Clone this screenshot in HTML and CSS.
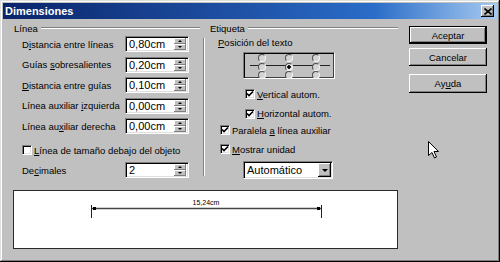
FILE: index.html
```html
<!DOCTYPE html>
<html lang="es">
<head>
  <meta charset="UTF-8" />
  <title>Dimensiones</title>
  <link rel="stylesheet" href="styles.css">
</head>
<body>

<div class="window">
  <div class="titlebar">
    <span class="title">Dimensiones</span>
    <span class="close-btn">
      <svg width="8" height="7" viewBox="0 0 8 7"><path d="M0.5 0.5 L7.5 6.5 M7.5 0.5 L0.5 6.5" stroke="#000" stroke-width="1.6"/></svg>
    </span>
  </div>

  <div class="content">
    <div class="main">
      <div class="groups">

        <!-- Línea -->
        <div class="group group-left">
          <div class="group-head"><span>Línea</span><span class="rule"></span></div>
          <div class="group-body">
            <div class="row"><label>D<u>i</u>stancia entre líneas</label><div class="field spin"><span>0,80cm</span><span class="spinner"><i class="up"></i><i class="down"></i></span></div></div>
            <div class="row"><label>Guías <u>s</u>obresalientes</label><div class="field spin"><span>0,20cm</span><span class="spinner"><i class="up"></i><i class="down"></i></span></div></div>
            <div class="row"><label><u>D</u>istancia entre guías</label><div class="field spin"><span>0,10cm</span><span class="spinner"><i class="up"></i><i class="down"></i></span></div></div>
            <div class="row"><label>Línea auxiliar <u>i</u>zquierda</label><div class="field spin"><span>0,00cm</span><span class="spinner"><i class="up"></i><i class="down"></i></span></div></div>
            <div class="row"><label>Línea au<u>x</u>iliar derecha</label><div class="field spin"><span>0,00cm</span><span class="spinner"><i class="up"></i><i class="down"></i></span></div></div>
            <div class="check-row check-under"><span class="checkbox"></span><span><u>L</u>ínea de tamaño debajo del objeto</span></div>
            <div class="row row-dec"><label>De<u>c</u>imales</label><div class="field spin"><span>2</span><span class="spinner"><i class="up"></i><i class="down"></i></span></div></div>
          </div>
        </div>

        <div class="vsep"></div>

        <!-- Etiqueta -->
        <div class="group group-right">
          <div class="group-head"><span>Etiqueta</span><span class="rule"></span></div>
          <div class="group-body">
            <div class="pos-label"><u>P</u>osición del texto</div>
            <div class="pos-box">
              <div class="radio-grid">
                <span class="radio"></span><span class="radio"></span><span class="radio"></span>
                <span class="radio"></span><span class="radio on"></span><span class="radio"></span>
                <span class="radio"></span><span class="radio"></span><span class="radio"></span>
              </div>
            </div>
            <div class="check-row check-vert"><span class="checkbox checked"><svg width="8" height="8" viewBox="0 0 8 8"><path d="M1 3.5 L3 5.5 L7 1.5" fill="none" stroke="#000" stroke-width="1.6"/></svg></span><span><u>V</u>ertical autom.</span></div>
            <div class="check-row check-horz"><span class="checkbox checked"><svg width="8" height="8" viewBox="0 0 8 8"><path d="M1 3.5 L3 5.5 L7 1.5" fill="none" stroke="#000" stroke-width="1.6"/></svg></span><span><u>H</u>orizontal autom.</span></div>
            <div class="check-row check-par"><span class="checkbox checked"><svg width="8" height="8" viewBox="0 0 8 8"><path d="M1 3.5 L3 5.5 L7 1.5" fill="none" stroke="#000" stroke-width="1.6"/></svg></span><span>Paralela <u>a</u> línea auxiliar</span></div>
            <div class="check-row check-unit"><span class="checkbox checked"><svg width="8" height="8" viewBox="0 0 8 8"><path d="M1 3.5 L3 5.5 L7 1.5" fill="none" stroke="#000" stroke-width="1.6"/></svg></span><span><u>M</u>ostrar unidad</span></div>
            <div class="field select"><span>Automático</span><span class="drop"><i class="down"></i></span></div>
          </div>
        </div>

      </div>

      <div class="preview">
        <svg width="383" height="57" viewBox="0 0 383 57">
          <line x1="78" y1="17.5" x2="307" y2="17.5" stroke="#444" stroke-width="1.5"/>
          <line x1="77.5" y1="14" x2="77.5" y2="27" stroke="#222" stroke-width="1"/>
          <line x1="307.5" y1="14" x2="307.5" y2="27" stroke="#222" stroke-width="1"/>
          <rect x="79" y="16" width="3" height="3" fill="#000"/>
          <rect x="303" y="16" width="3" height="3" fill="#000"/>
          <text x="192" y="14" font-size="7" text-anchor="middle" font-family="Liberation Sans, Arial, sans-serif" fill="#000">15,24cm</text>
        </svg>
      </div>
    </div>

    <div class="side">
      <div class="btn btn-default">Aceptar</div>
      <div class="btn">Cancelar</div>
      <div class="btn btn-help">Ay<u>u</u>da</div>
    </div>
  </div>

  <svg class="cursor" width="12" height="18" viewBox="0 0 12 18">
    <path d="M0.5 0.5 L0.5 14.5 L4 11.5 L6.5 17 L8.5 16 L6 10.5 L10.5 10.5 Z" fill="#fff" stroke="#000" stroke-width="1"/>
  </svg>
</div>

</body>
</html>
```

FILE: styles.css
```css
:root {
  --face: #c0c0c0;
  --shadow: #808080;
  --dark: #404040;
  --light: #dfdfdf;
}

* {
  box-sizing: border-box;
}

body {
  margin: 0;
  font-family: 'Liberation Sans', Arial, sans-serif;
  font-size: 9.5px;
  color: #000;
  background: var(--face);
}

u {
  text-decoration: underline;
  text-underline-offset: 1px;
}

.window {
  position: relative;
  width: 500px;
  height: 262px;
  padding: 3px;
  background: var(--face);
  box-shadow: inset -1px -1px #000, inset 1px 1px var(--light), inset -2px -2px var(--shadow), inset 2px 2px #fff;
}

.titlebar {
  height: 16px;
  display: flex;
  align-items: center;
  justify-content: space-between;
  padding: 0 3px 0 2px;
  background: linear-gradient(to right, #0a246a, #2a6cc8 75%, #a6caf0);
}

.title {
  color: #fff;
  font-weight: bold;
  font-size: 11px;
}

.close-btn {
  width: 13px;
  height: 12px;
  display: flex;
  align-items: center;
  justify-content: center;
  background: var(--face);
  box-shadow: inset -1px -1px #000, inset 1px 1px #fff, inset -2px -2px var(--shadow);
}

.content {
  display: flex;
  padding: 3px 0 0 10px;
}

.main {
  width: 385px;
}

.groups {
  display: flex;
  height: 164px;
}

.group-head {
  display: flex;
  align-items: center;
  gap: 3px;
  height: 12px;
  padding-left: 1px;
}

.rule {
  flex: 1;
  height: 2px;
  border-top: 1px solid var(--shadow);
  border-bottom: 1px solid #fff;
}

.group-left {
  width: 190px;
  padding-right: 3px;
}

.group-left .group-body {
  padding-left: 9px;
}

.vsep {
  width: 2px;
  height: 138px;
  margin-top: 16px;
  border-left: 1px solid var(--shadow);
  border-right: 1px solid #fff;
}

.group-right {
  width: 189px;
  margin-left: 4px;
}

.group-right .group-body {
  padding-left: 9px;
}

.row {
  display: flex;
  align-items: center;
  height: 16px;
  width: 167px;
  margin-top: 4.5px;
}

.row:first-child {
  margin-top: 2px;
}

.row label {
  flex: 1;
}

.row-dec {
  margin-top: 4px;
}

/* sunken white fields */
.field {
  display: flex;
  align-items: center;
  background: #fff;
  border: 1px solid;
  border-color: var(--shadow) #fff #fff var(--shadow);
  box-shadow: inset 1px 1px #000, inset -1px -1px var(--light);
  font-size: 11px;
}

.field > span:first-child {
  flex: 1;
  padding-left: 3px;
}

.spin {
  width: 64px;
  height: 16px;
}

.spinner {
  display: flex;
  flex-direction: column;
  width: 12px;
  height: 12px;
  margin-right: 2px;
}

.spinner i {
  flex: 1;
  display: flex;
  align-items: center;
  justify-content: center;
  background: var(--face);
  box-shadow: inset -1px -1px var(--shadow), inset 1px 1px #fff;
}

.up::after,
.down::after {
  content: '';
  border-left: 2px solid transparent;
  border-right: 2px solid transparent;
}

.up::after {
  border-bottom: 2px solid #000;
}

.down::after {
  border-top: 2px solid #000;
}

.check-row {
  display: flex;
  align-items: center;
  gap: 2px;
  height: 14px;
}

.check-under {
  height: 16px;
  margin-top: 8px;
}

.checkbox {
  width: 10px;
  height: 10px;
  display: flex;
  align-items: center;
  justify-content: center;
  background: #fff;
  border: 1px solid;
  border-color: var(--shadow) #fff #fff var(--shadow);
  box-shadow: inset 1px 1px #000, inset -1px -1px var(--light);
}

.pos-label {
  height: 14px;
  line-height: 14px;
  margin-top: 2px;
}

.pos-box {
  width: 92px;
  height: 27px;
  margin: 2px 0 0 25px;
  border: 1px solid;
  border-color: var(--shadow) #fff #fff var(--shadow);
  box-shadow: inset 1px 1px #000, inset -1px -1px var(--dark);
  background: linear-gradient(#222, #222) no-repeat 6px 12px / 80px 1px, var(--face);
}

.radio-grid {
  display: grid;
  grid-template-columns: repeat(3, 8px);
  grid-auto-rows: 8px;
  column-gap: 19px;
  row-gap: 0.5px;
  padding: 1px 0 0 14px;
}

.radio {
  width: 8px;
  height: 8px;
  border-radius: 50%;
  background: #d4d4d4;
  border: 1px solid #505050;
  border-right-color: #f4f4f4;
  border-bottom-color: #f4f4f4;
}

.radio.on {
  background: radial-gradient(circle, #000 1.5px, #e8e8e8 2px);
}

.check-vert {
  margin: 8px 0 0 27px;
}

.check-horz {
  margin: 5.5px 0 0 27px;
}

.check-par {
  margin: 2.5px 0 0 2px;
}

.check-unit {
  margin: 5px 0 0 2px;
}

.select {
  width: 90px;
  height: 18px;
  margin: 5px 0 0 25px;
}

.drop {
  width: 13px;
  height: 14px;
  margin-right: 1px;
  display: flex;
  align-items: center;
  justify-content: center;
  background: var(--face);
  box-shadow: inset -1px -1px #000, inset 1px 1px #fff, inset -2px -2px var(--shadow);
}

.drop .down::after {
  border-left-width: 3px;
  border-right-width: 3px;
  border-top-width: 3px;
}

.drop i {
  display: flex;
}

.preview {
  width: 385px;
  height: 59px;
  margin-top: 4px;
  background: #fff;
  border: 1px solid #2a2a2a;
}

.preview svg {
  display: block;
}

.side {
  width: 78px;
  margin-left: 11px;
  padding-top: 4px;
  display: flex;
  flex-direction: column;
}

.btn {
  height: 18px;
  display: flex;
  align-items: center;
  justify-content: center;
  background: var(--face);
  box-shadow: inset -1px -1px #000, inset 1px 1px #fff, inset -2px -2px var(--shadow);
  margin-bottom: 4px;
}

.btn-default {
  border: 1px solid #000;
  box-shadow: inset -1px -1px #000, inset 1px 1px #fff, inset -2px -2px var(--shadow);
}

.btn-help {
  margin-top: 4px;
  height: 19px;
}

.cursor {
  position: absolute;
  left: 428px;
  top: 141px;
}
```
